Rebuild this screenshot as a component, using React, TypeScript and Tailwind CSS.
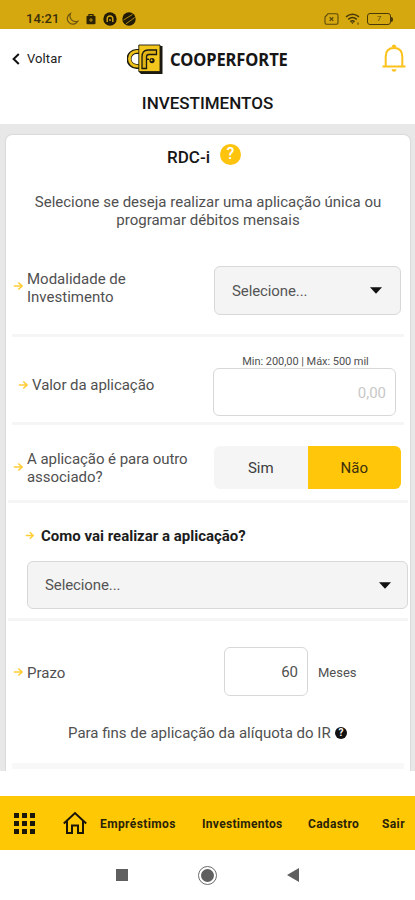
import { ReactNode } from "react";

const Arrow = ({ className = "" }: { className?: string }) => (
  <svg viewBox="0 0 10 10" className={`shrink-0 ${className}`} fill="none" stroke="#ffce38" strokeWidth="1.6">
    <path d="M0.8 5H9M5.3 1.5L9 5L5.3 8.5" />
  </svg>
);

const Caret = () => (
  <svg viewBox="0 0 12 7" className="h-[7px] w-[12px]">
    <path d="M0 0.3H12L6 6.8Z" fill="#111" />
  </svg>
);

const Divider = ({ className = "" }: { className?: string }) => (
  <div className={`h-[3px] shrink-0 bg-[#f5f5f5] ${className}`} />
);

interface SelectProps {
  className: string;
  children: ReactNode;
}

const Select = ({ className, children }: SelectProps) => (
  <div
    className={`flex items-center justify-between rounded-md border border-[#d8d8d8] bg-[#f4f4f4] pl-[17px] text-[15px] tracking-[-0.1px] text-[#555] ${className}`}
  >
    {children}
    <Caret />
  </div>
);

const StatusBar = () => (
  <div className="flex h-[29px] items-start justify-between bg-[#d6a810] pt-[11px] pr-[22px] pl-[26px] text-[#3a2f0a]">
    <div className="flex h-4 items-center">
      <span className="w-[33px] text-[13px] leading-4 font-medium tracking-[0.1px]">14:21</span>
      <svg viewBox="0 0 14 14" className="ml-[6px] h-[14px] w-[14px]" fill="none" stroke="#6b540f" strokeWidth="1.2">
        <path d="M5.5 1.5A5.6 5.6 0 1 0 12.8 9.3A5.8 5.8 0 0 1 5.5 1.5Z" />
      </svg>
      <svg viewBox="0 0 10 12" className="ml-[7px] h-[12px] w-[10px]">
        <path d="M3 3V1.5H7V3" fill="none" stroke="#2c2306" strokeWidth="1.2" />
        <rect x="0.5" y="2.8" width="9" height="8.4" rx="1" fill="#2c2306" />
        <path d="M5 5V9M3 7H7" stroke="#b08b12" strokeWidth="1.1" />
      </svg>
      <svg viewBox="0 0 14 14" className="ml-[7px] h-[14px] w-[14px]">
        <circle cx="7" cy="7" r="6.7" fill="#211a05" />
        <path d="M4.2 10V6.8Q4.2 4 7 4Q9.8 4 9.8 6.8V10M7 7V9" fill="none" stroke="#d6a810" strokeWidth="1.4" />
      </svg>
      <svg viewBox="0 0 14 14" className="ml-[5px] h-[14px] w-[14px]">
        <circle cx="7" cy="7" r="6.7" fill="#211a05" />
        <path d="M1.5 8L10.5 2.5M4 11.8L12.8 5.5" stroke="#b08b12" strokeWidth="1" />
      </svg>
    </div>
    <div className="flex h-4 items-center">
      <svg viewBox="0 0 15 12" className="h-[12px] w-[15px]" fill="none" stroke="#5c480c" strokeWidth="1.1">
        <path d="M4 0.8H12.5Q14 0.8 14 2.3V9.7Q14 11.2 12.5 11.2H2.5Q1 11.2 1 9.7V4Z" />
        <path d="M5.7 4.3L9.3 7.9M9.3 4.3L5.7 7.9" strokeWidth="1.3" />
      </svg>
      <svg viewBox="0 0 16 12" className="ml-[6px] h-[12px] w-[16px]" fill="none" stroke="#4a3a09" strokeWidth="1.5">
        <path d="M1 3.8Q7.5 -1.5 14 3.8M3.2 6.3Q7.5 2.8 11.8 6.3M5.3 8.6Q7.5 7 9.7 8.6" />
        <path d="M6 9.3L7.5 11L9 9.3Z" fill="#4a3a09" stroke="none" />
        <path d="M13 9.5V11.7" strokeWidth="1" />
      </svg>
      <div className="ml-[6px] flex items-center">
        <div className="flex h-[12px] w-[24px] items-center justify-center rounded-[3px] border border-[#4a3a09] text-[8px] leading-none text-[#5c480c]">
          7
        </div>
        <div className="h-[5px] w-[2px] rounded-r bg-[#4a3a09]" />
      </div>
    </div>
  </div>
);

const Logo = () => (
  <svg viewBox="0 0 36 31" className="h-[31px] w-[36px]">
    <path d="M12 7.5H9.5A7.5 7.5 0 0 0 9.5 22.5H12" fill="none" stroke="#1c1a10" strokeWidth="5" />
    <path d="M12 7.4H9.8A7.4 7.4 0 0 0 9.8 22.2H12" fill="none" stroke="#edc21b" strokeWidth="2.8" />
    <path d="M12 1L35.5 2V30H14L12 28Z" fill="#1c1a10" />
    <path d="M11.8 1H33V27.6H11.8Z" fill="#f2c61d" stroke="#1c1a10" strokeWidth="0.9" />
    <path d="M15 24.5V13Q15 6 21 6H29.5V10.5H22Q19.5 10.5 19.5 13V24.5Z" fill="#e0b414" stroke="#1c1a10" strokeWidth="1.3" />
    <path d="M20 15.2H22" stroke="#1c1a10" strokeWidth="1.5" />
    <circle cx="25" cy="16.6" r="2.6" fill="#1c1a10" />
    <circle cx="24.6" cy="16.2" r="0.9" fill="#f2c61d" />
  </svg>
);

const Header = () => (
  <header className="h-[95px] bg-white">
    <div className="flex h-[60px] items-center">
      <svg viewBox="0 0 8 12" className="ml-[12px] h-[12px] w-[8px]" fill="none" stroke="#111" strokeWidth="2">
        <path d="M6.8 1L1.6 6L6.8 11" />
      </svg>
      <span className="ml-[7px] w-[100px] text-[13px] tracking-[0.1px] text-[#222]">Voltar</span>
      <Logo />
      <span className="ml-[7px] w-[212px] font-['Noto_Sans'] text-[18px] font-bold tracking-[-0.1px] text-[#161616]">
        <span className="inline-block origin-left scale-x-[0.92] pt-[1px]">COOPERFORTE</span>
      </span>
      <svg viewBox="0 0 24 28" className="mb-[2px] h-[28px] w-[24px] shrink-0" fill="none" stroke="#fbc21c" strokeWidth="2">
        <path d="M0.5 22.6H23.5M3.7 22.6V12.5Q3.7 4 12 4Q20.3 4 20.3 12.5V22.6" />
        <path d="M9.5 3.2Q9.8 0.5 12 0.5Q14.2 0.5 14.5 3.2ZM9.5 25.2H14.5Q14 27.7 12 27.7Q10 27.7 9.5 25.2Z" fill="#fbc21c" stroke="none" />
      </svg>
    </div>
    <h1 className="pt-[2px] text-center text-[17px] leading-6 font-medium text-[#161616]">INVESTIMENTOS</h1>
  </header>
);

const NavBar = () => (
  <nav className="flex h-[54px] items-center bg-[#ffc805] pt-[2px] text-[12px] font-bold text-[#2b2306]">
    <div className="mb-[1px] ml-[14px] grid grid-cols-3 gap-[3px]">
      {Array.from({ length: 9 }, (_, i) => (
        <div key={i} className="h-[5px] w-[5px] bg-[#1a1608]" />
      ))}
    </div>
    <svg viewBox="0 0 24 24" className="mb-[2px] ml-[28px] h-[24px] w-[24px] shrink-0" fill="none" stroke="#1a1608" strokeWidth="2">
      <path d="M0.8 12.5L12 2L23.2 12.5M4 10V22H9V14.5H15V22H20V10" />
    </svg>
    <span className="ml-[13px] w-[102px] tracking-[0.4px]">Empréstimos</span>
    <span className="w-[106px] tracking-[0.3px]">Investimentos</span>
    <span className="w-[74px] tracking-[0.3px]">Cadastro</span>
    <span className="tracking-[0.4px]">Sair</span>
  </nav>
);

const App = () => {
  return (
    <div className="flex h-[900px] w-[415px] flex-col overflow-hidden bg-white font-[Roboto,sans-serif]">
      <StatusBar />
      <Header />
      <main className="h-[647px] bg-[#e8e8e8] pt-[11px] pr-[5px] pl-[6px]">
        <div className="flex h-[636px] flex-col rounded-t-md bg-white text-[15px] leading-[18px] text-[#505050] shadow-[0_0_2px_#bbb]">
          <div className="ml-[161px] flex h-[40px] items-center">
            <h2 className="w-[53px] pt-[3px] text-[17px] font-medium text-[#161616]">RDC-i</h2>
            <div className="mb-[2px] flex h-[21px] w-[21px] items-center justify-center rounded-full bg-[#fdc30d] text-[16px] font-medium text-white">
              ?
            </div>
          </div>
          <p className="mt-[18px] h-[73px] text-center">
            Selecione se deseja realizar uma aplicação única ou
            <br />
            programar débitos mensais
          </p>

          <div className="flex h-[68px] pl-[7px]">
            <Arrow className="mt-[15px] h-[10px] w-[10px]" />
            <span className="mt-[4px] ml-[4px] w-[187px]">
              Modalidade de
              <br />
              Investimento
            </span>
            <Select className="h-[49px] w-[187px] pr-[18px]">Selecione...</Select>
          </div>
          <Divider className="mx-[6px]" />

          <div className="flex h-[85px] pl-[12px]">
            <Arrow className="mt-[43px] h-[10px] w-[10px]" />
            <span className="mt-[39px] ml-[4px] w-[181px] tracking-[-0.05px]">Valor da aplicação</span>
            <div className="w-[183px]">
              <div className="mt-[17px] h-[14px] pt-[1px] pl-[2px] text-center text-[11px] leading-[14px] tracking-[-0.05px]">
                Min: 200,00 | Máx: 500 mil
              </div>
              <div className="flex h-[48px] items-center justify-end rounded-md border border-[#d8d8d8] pt-[1px] pr-[9px] text-[#c8c8c8]">
                0,00
              </div>
            </div>
          </div>
          <Divider className="mx-[6px]" />

          <div className="flex h-[75px] pl-[7px]">
            <Arrow className="mt-[37px] h-[10px] w-[10px]" />
            <span className="mt-[25px] ml-[4px] w-[187px] tracking-[-0.05px]">
              A aplicação é para outro
              <br />
              associado?
            </span>
            <div className="mt-[21px] grid h-[43px] w-[187px] grid-cols-2 overflow-hidden rounded-md text-[#3c3c3c]">
              <div className="flex items-center justify-center bg-[#f5f5f5]">Sim</div>
              <div className="flex items-center justify-center bg-[#ffc60a] text-[#3a2f0a]">Não</div>
            </div>
          </div>
          <Divider className="mx-[2px]" />

          <div className="h-[115px] pl-[19px]">
            <div className="flex h-[58px] items-center pt-[7px]">
              <Arrow className="h-[9px] w-[9px]" />
              <span className="ml-[7px] font-bold text-[#1c1c1c]">Como vai realizar a aplicação?</span>
            </div>
            <div className="pl-[2px]">
              <Select className="h-[48px] w-[381px] pr-[16px]">Selecione...</Select>
            </div>
          </div>
          <Divider className="mx-[2px]" />

          <div className="flex h-[75px] items-end pl-[7px]">
            <Arrow className="mb-[19px] h-[10px] w-[10px]" />
            <span className="mb-[14px] ml-[4px] w-[197px]">Prazo</span>
            <div className="flex h-[49px] w-[84px] items-center justify-end rounded-md border border-[#d8d8d8] pt-[1px] pr-[9px]">60</div>
            <span className="mb-[14px] ml-[10px] text-[13px]">Meses</span>
          </div>
          <div className="mt-[28px] ml-[62px] flex h-[18px] items-center">
            <span className="w-[267px] whitespace-nowrap">Para fins de aplicação da alíquota do IR</span>
            <div className="flex h-[12px] w-[12px] items-center justify-center rounded-full bg-[#111] text-[10px] leading-none font-bold text-white">
              ?
            </div>
          </div>
          <div className="mx-[6px] mt-[21px] h-[6px] bg-[#f8f8f8]" />
        </div>
      </main>
      <div className="h-[25px] shrink-0 bg-white" />
      <NavBar />
      <footer className="flex h-[50px] items-center pl-[116px]">
        <div className="h-[12px] w-[12px] bg-[#5f5f5f]" />
        <div className="ml-[70px] flex h-[19px] w-[19px] items-center justify-center rounded-full border border-[#6b6b6b]">
          <div className="h-[13px] w-[13px] rounded-full bg-[#5f5f5f]" />
        </div>
        <svg viewBox="0 0 12 14" className="ml-[70px] h-[14px] w-[12px]">
          <path d="M12 0V14L0 7Z" fill="#5f5f5f" />
        </svg>
      </footer>
    </div>
  );
};
export default App;
